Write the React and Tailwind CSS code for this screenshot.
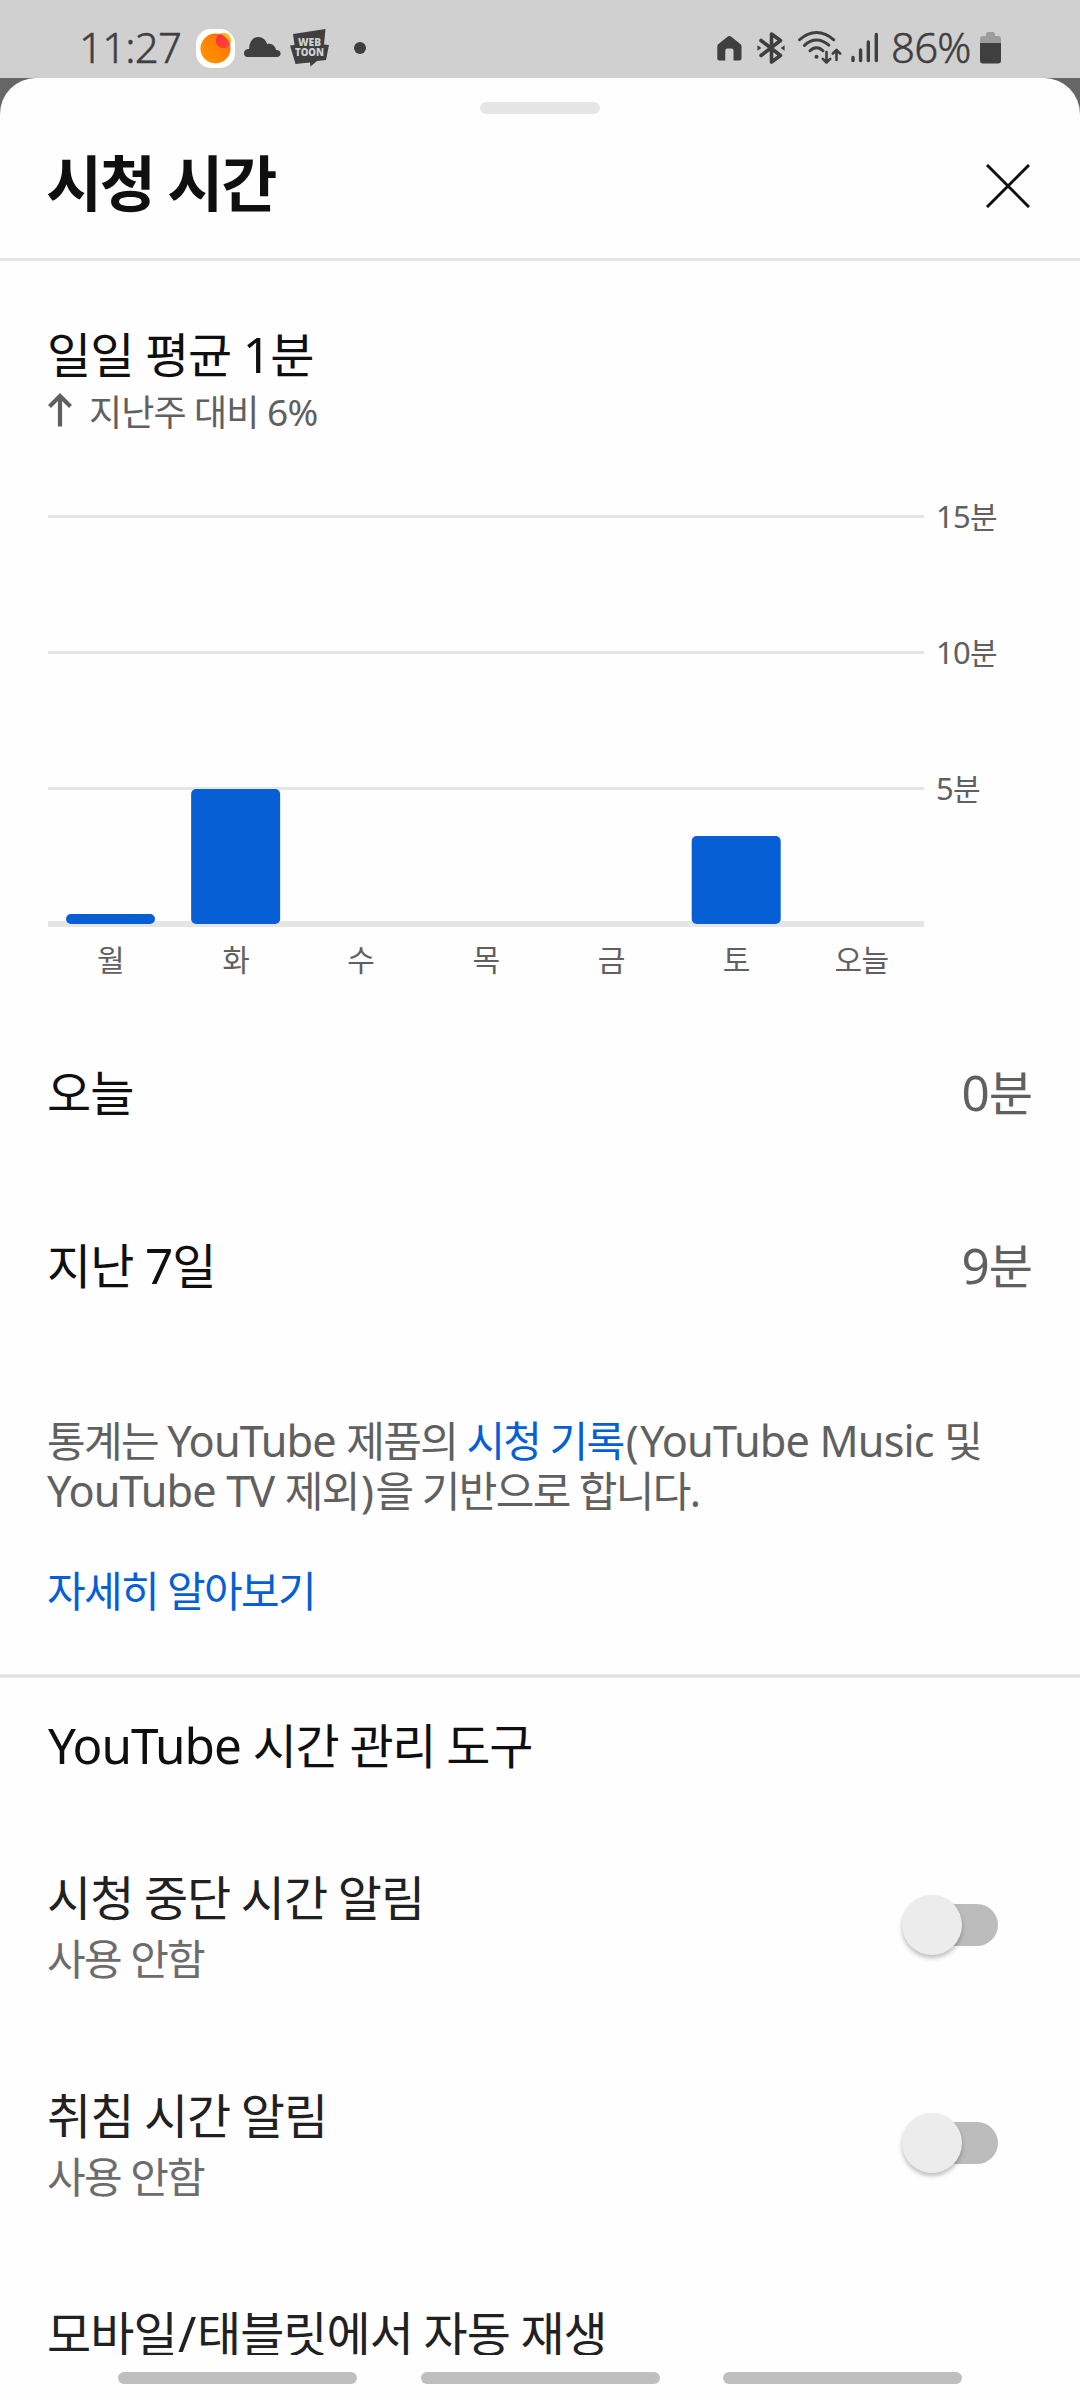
import React, { useState } from "react";
import clsx from "clsx";

const days = [
  { label: "월", height: 10 },
  { label: "화", height: 135 },
  { label: "수", height: 0 },
  { label: "목", height: 0 },
  { label: "금", height: 0 },
  { label: "토", height: 88 },
  { label: "오늘", height: 0 },
];

const yLabels = ["15분", "10분", "5분"];

const settings = [
  { id: "break", title: "시청 중단 시간 알림", status: "사용 안함" },
  { id: "bedtime", title: "취침 시간 알림", status: "사용 안함" },
  { id: "autoplay", title: "모바일/태블릿에서 자동 재생" },
];

// Latin letters and digits run slightly larger than the Hangul around them,
// brackets and slashes get a little air on both sides
function Mixed({ children }) {
  return children.split(/([A-Za-z0-9%]+(?: [A-Za-z]*)*|[()/])/).map((part, i) => {
    if (i % 2 === 0) return part;
    return (
      <span
        key={i}
        className={clsx(
          "text-[1.03em] leading-none tracking-[-0.02em]",
          /[()]/.test(part) && "px-[0.055em]",
          part === "/" && "px-[0.03em]"
        )}
      >
        {part}
      </span>
    );
  });
}

function StatusBar() {
  return (
    <div className="flex h-[78px] items-start bg-[#d0d0d0] text-[#3f3f3f]">
      <div className="ml-[79px] mt-[27px] w-[117px] text-[42px] font-light leading-[40px] tracking-[-0.8px] [-webkit-text-stroke:0.5px]">
        11:27
      </div>
      <svg className="mt-[29px] h-[39px] w-[39px]" viewBox="0 0 39 39">
        <defs>
          <linearGradient id="sun" x1="0" y1="1" x2="1" y2="0">
            <stop offset="0" stopColor="#ff9a00" />
            <stop offset="1" stopColor="#ff6a00" />
          </linearGradient>
          <linearGradient id="flare" x1="0" y1="0" x2="1" y2="1">
            <stop offset="0" stopColor="#ff2a4d" />
            <stop offset="1" stopColor="#ff4a2a" />
          </linearGradient>
          <clipPath id="sunClip">
            <circle cx="19.5" cy="19.5" r="15" />
          </clipPath>
        </defs>
        <rect width="39" height="39" rx="15" fill="#fff" />
        <circle cx="27.5" cy="11.5" r="7.7" fill="#fbb816" />
        <circle cx="19.5" cy="19.5" r="15" fill="url(#sun)" />
        <circle cx="27.5" cy="11.5" r="7.7" fill="url(#flare)" clipPath="url(#sunClip)" />
      </svg>
      <svg className="ml-[9px] mt-[37px] h-[20px] w-[37px]" viewBox="0 0 37 20" fill="currentColor">
        <path d="M4 20a3.6 3.6 0 0 1-4-4c0-2.600 2.500-4.500 5.200-4C5.200 4.800 9 0 14.500 0c4.200 0 7.400 2.900 8.600 6.900 4.400-1.100 8.300 1.900 8.900 6 2.800-.2 4.600 1.500 4.600 3.600 0 2-1.600 3.500-3.600 3.500z" />
      </svg>
      <svg className="ml-[9px] mt-[29px] h-[38px] w-[39px]" viewBox="0 0 39 38">
        <path d="M3 5 35.500 0 34 15.500l5 .5-3 15-9 1-6.500 5.500-.5-4-14.500 1.500L0 16.500l4.500-.5z" fill="#3f3f3f" />
        <text x="19.500" y="17" textAnchor="middle" textLength="23" lengthAdjust="spacingAndGlyphs" fontSize="10.500" fill="#d0d0d0" className="font-['Open_Sans'] font-extrabold">
          WEB
        </text>
        <text x="19.500" y="26.500" textAnchor="middle" textLength="29" lengthAdjust="spacingAndGlyphs" fontSize="11" fill="#d0d0d0" className="font-['Open_Sans'] font-extrabold">
          TOON
        </text>
      </svg>
      <span className="ml-[25px] mt-[42px] h-3 w-3 rounded-full bg-[#3f3f3f]" />

      <div className="ml-auto mr-[79px] flex items-start">
        <svg className="mt-[36px] h-[25px] w-[25px]" viewBox="0 0 25 25" fill="currentColor">
          <path d="M10.800.6a2.600 2.600 0 0 1 3.200 0l9.300 7.300A3 3 0 0 1 24.500 10.300V22.500a2 2 0 0 1-2 2H16.500V14.500a2 2 0 0 0-2-2h-4.200a2 2 0 0 0-2 2v10H2.300a2 2 0 0 1-2-2V10.300a3 3 0 0 1 1.200-2.400z" />
        </svg>
        <svg className="ml-[15px] mt-[32px] h-[32px] w-[28px]" viewBox="0 0 28 32" fill="none" stroke="currentColor" strokeWidth="3.600" strokeLinejoin="round" strokeLinecap="round">
          <path d="M4 8.500 23.500 23.500 14.500 30V2L23.500 8.500 4 23.500" />
          <path d="M.4 13.200 4.400 16 .4 18.800zM27.600 13.200 23.600 16l4 2.800z" fill="currentColor" stroke="none" />
        </svg>
        <svg className="ml-[13px] mt-[31px] h-[33px] w-[44px]" viewBox="0 0 44 33" fill="none" stroke="currentColor" strokeWidth="2.900" strokeLinecap="round" strokeLinejoin="round">
          <path d="M1.500 8.800Q9.500 1.500 18.500 1.500t17.300 7.300M6.500 14.400Q12 9 18.500 9t12.300 5.200M12 19.800q3-3 6.500-3t6.500 3" />
          <circle cx="18.500" cy="25.800" r="2" fill="currentColor" stroke="none" />
          <path d="M28.500 21v9.800M24.800 27.800l3.700 3.700 3.700-3.700M38.500 29v-9.800M34.800 22.700 38.500 19l3.700 3.700" strokeWidth="2.600" />
        </svg>
        <svg className="ml-[9px] mt-[32px] h-[31px] w-[28px]" viewBox="0 0 28 31" stroke="currentColor" strokeWidth="3.400" strokeLinecap="round">
          <path d="M2 25.500v3M9.600 18v10.500M17.300 10v18.500M25.300 2.500v26" />
        </svg>
        <span className="ml-[12px] mt-[27px] w-[89px] text-[42px] font-light leading-[40px] tracking-[-0.8px] [-webkit-text-stroke:0.5px]">
          86%
        </span>
        <svg className="mt-[32px] h-[32px] w-[21px]" viewBox="0 0 21 32">
          <path d="M6 4V2a2 2 0 0 1 2-2h5a2 2 0 0 1 2 2v2h3a3 3 0 0 1 3 3v5H0V7a3 3 0 0 1 3-3z" fill="#9d9d9d" />
          <path d="M0 11h21v17.500a3 3 0 0 1-3 3H3a3 3 0 0 1-3-3z" fill="#3f3f3f" />
        </svg>
      </div>
    </div>
  );
}

function Chart() {
  return (
    <div className="mt-[78px] pl-px">
      <div className="flex h-[412px]">
        <svg className="h-[412px] w-[876px]" viewBox="0 0 876 412">
          {[0, 136, 272].map((y) => (
            <rect key={y} y={y} width="876" height="3" fill="#e5e5e5" />
          ))}
          <rect y="406" width="876" height="6" fill="#e5e5e5" />
          {days.map((day, i) =>
            day.height ? (
              <rect
                key={day.label}
                x={18 + i * 125.14}
                y={409 - day.height}
                width="89"
                height={day.height}
                rx="5"
                fill="#065fd4"
              />
            ) : null
          )}
        </svg>
        <div className="-mt-[18px] ml-3 flex flex-col gap-[96px] text-[30px] leading-[40px] tracking-[-0.02em] text-[#606060]">
          {yLabels.map((label) => (
            <span key={label}>
              <Mixed>{label}</Mixed>
            </span>
          ))}
        </div>
      </div>
      <div className="mt-[13px] grid w-[876px] grid-cols-7 text-center text-[30px] leading-[40px] tracking-[-0.02em] text-[#606060]">
        {days.map((day) => (
          <span key={day.label}>{day.label}</span>
        ))}
      </div>
    </div>
  );
}

function StatRow({ label, value }) {
  return (
    <div className="flex justify-between text-[48px] leading-[60px] tracking-[-0.02em] text-[#0f0f0f]">
      <span>
        <Mixed>{label}</Mixed>
      </span>
      <span className="text-[#606060]">
        <Mixed>{value}</Mixed>
      </span>
    </div>
  );
}

function Toggle({ checked, onChange }) {
  return (
    <button
      type="button"
      role="switch"
      aria-checked={checked}
      onClick={onChange}
      className="mb-[2px] mr-[34px] flex h-[60px] w-[96px] items-center"
    >
      <span className={clsx("ml-[9px] flex h-[42px] w-[87px] items-center rounded-full bg-[#bcbcbc]", checked && "justify-end")}>
        <span className="-ml-[9px] h-[60px] w-[60px] shrink-0 rounded-full bg-[#ececec] shadow-[0_3px_4px_rgba(0,0,0,0.25)]" />
      </span>
    </button>
  );
}

function SettingRow({ title, status }) {
  const [checked, setChecked] = useState(false);

  return (
    <div className="flex h-[116px] shrink-0 items-center justify-between">
      <div className="h-full">
        <div className="text-[48px] leading-[60px] tracking-[-0.02em] text-[#212121] [word-spacing:-1px]">
          <Mixed>{title}</Mixed>
        </div>
        {status && (
          <div className="mt-[6px] text-[42px] leading-[50px] tracking-[-0.04em] text-[#6c6c6c]">{status}</div>
        )}
      </div>
      {status && <Toggle checked={checked} onChange={() => setChecked(!checked)} />}
    </div>
  );
}

export default function App() {
  return (
    <div className="flex h-[2400px] w-[1080px] flex-col overflow-hidden bg-[#fefefe] font-['Noto_Sans','Noto_Sans_CJK_KR',sans-serif]">
      <StatusBar />
      <div className="h-[2277px] shrink-0 bg-[#666666]">
        <div className="flex h-full flex-col overflow-hidden rounded-t-[36px] bg-[#fefefe]">
          <div className="mx-auto mt-6 h-3 w-[120px] shrink-0 rounded-full bg-[#e5e5e5]" />
          <div className="mt-[33px] flex h-[111px] shrink-0 items-start justify-between pl-[46px] pr-[50px]">
            <h1 className="mt-px text-[61px] font-bold leading-[72px] tracking-[-0.037em] text-[#0f0f0f]">시청 시간</h1>
            <svg className="mt-[17px] h-[44px] w-[44px]" viewBox="0 0 44 44" stroke="#0f0f0f" strokeWidth="3">
              <path d="M1 1l42 42M43 1 1 43" />
            </svg>
          </div>
          <div className="h-[3px] shrink-0 bg-[#e5e5e5]" />

          <div className="shrink-0 pl-[47px] pr-12 pt-[66px]">
            <div className="text-[48px] leading-[56px] tracking-[-0.02em] text-[#0f0f0f]">
              <Mixed>일일 평균 1분</Mixed>
            </div>
            <div className="mt-[6px] flex text-[36px] leading-[48px] tracking-[-0.025em] text-[#606060]">
              <svg className="ml-px mr-[17px] mt-[4px] h-[34px] w-[24px]" viewBox="0 0 24 34" fill="none" stroke="currentColor" strokeWidth="4.200">
                <path d="M12 33.500V3M1.500 13.500 12 3l10.500 10.500" />
              </svg>
              <span>
                <Mixed>지난주 대비 6%</Mixed>
              </span>
            </div>
            <Chart />
            <div className="mt-[83px] flex flex-col gap-[113px]">
              <StatRow label="오늘" value="0분" />
              <StatRow label="지난 7일" value="9분" />
            </div>
            <div className="-mr-8 mt-[120px] text-[42px] leading-[50px] tracking-[-0.04em] text-[#606060]">
              <p>
                <Mixed>통계는 YouTube 제품의 </Mixed>
                <a className="text-[#065fd4]">시청 기록</a>
                <Mixed>(YouTube Music 및</Mixed>
                <br />
                <Mixed>YouTube TV 제외)을 기반으로 합니다.</Mixed>
              </p>
              <a className="mt-[50px] block text-[#065fd4]">자세히 알아보기</a>
            </div>
          </div>
          <div className="mt-[58px] h-1 shrink-0 border-y border-[#ededed] bg-[#e0e0e0]" />

          <div className="flex flex-col pl-[47px] pr-12">
            <h2 className="ml-px mt-[38px] text-[48px] leading-[60px] tracking-[-0.028em] text-[#0f0f0f]">
              <Mixed>YouTube 시간 관리 도구</Mixed>
            </h2>
            <div className="mt-[92px] flex flex-col gap-[102px]">
              {settings.map((item) => (
                <SettingRow key={item.id} title={item.title} status={item.status} />
              ))}
            </div>
          </div>
        </div>
      </div>
      <div className="flex gap-[63.5px] pl-[118px] pt-[17px]">
        <span className="h-3 w-[239px] rounded-full bg-[#bfbfbf]" />
        <span className="h-3 w-[239px] rounded-full bg-[#bfbfbf]" />
        <span className="h-3 w-[239px] rounded-full bg-[#bfbfbf]" />
      </div>
    </div>
  );
}
